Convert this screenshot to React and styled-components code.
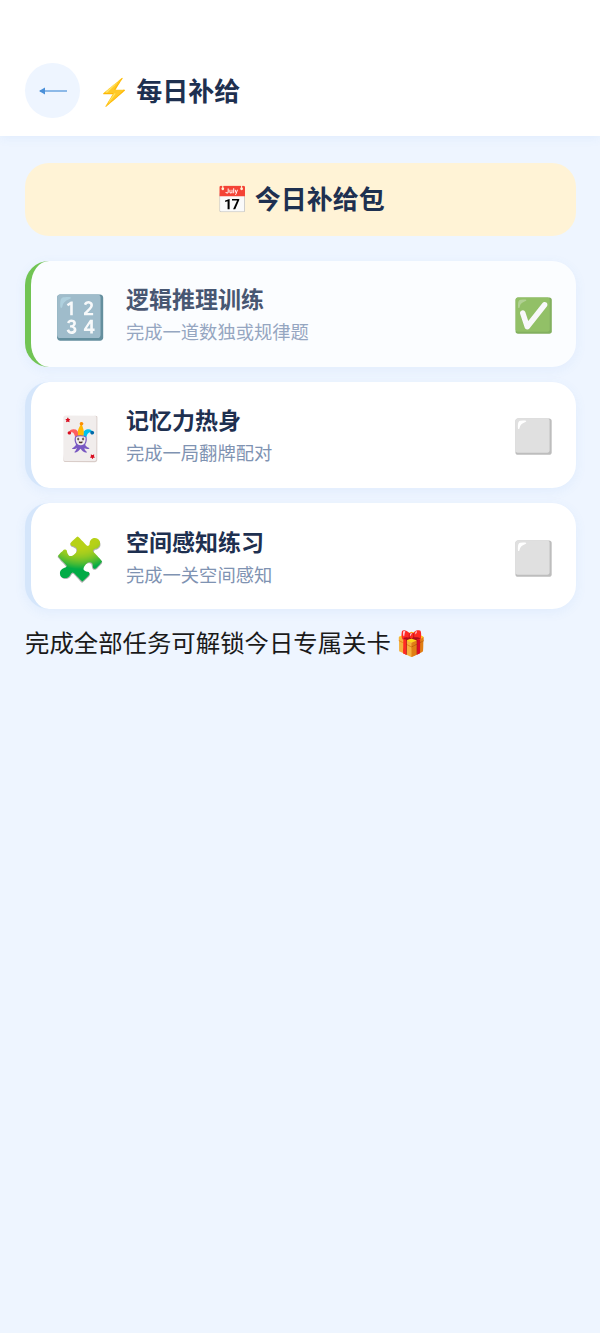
import React from 'react';
import styled, { createGlobalStyle } from 'styled-components';

const GlobalStyle = createGlobalStyle`
  html, body {
    margin: 0;
    padding: 0;
    background: #eef5ff;
  }
  body {
    font-family: "Noto Sans CJK SC", "Noto Sans", "Noto Color Emoji", sans-serif;
  }
`;

const Page = styled.div`
  min-height: 1333px;
  background: #eef5ff;
`;

const Header = styled.header`
  display: flex;
  align-items: center;
  gap: 18px;
  height: 136px;
  box-sizing: border-box;
  padding: 63px 25px 18px;
  background: #ffffff;
  box-shadow: 0 2px 10px rgba(74, 144, 226, 0.08);
`;

const BackButton = styled.button`
  display: flex;
  align-items: center;
  justify-content: center;
  width: 55px;
  height: 55px;
  padding: 0;
  border: none;
  border-radius: 50%;
  background: #eef5ff;
  color: #4a90d9;
`;

const Title = styled.h1`
  margin: 0;
  padding-bottom: 2px;
  font-size: 26px;
  line-height: 36px;
  font-weight: 700;
  color: #1e3050;
`;

const Content = styled.main`
  display: flex;
  flex-direction: column;
  padding: 27px 24px 0 25px;
`;

const Banner = styled.div`
  height: 73px;
  margin-bottom: 25px;
  border-radius: 24px;
  background: #fff3d6;
  font-size: 26px;
  font-weight: 700;
  line-height: 70px;
  text-align: center;
  color: #1e3050;
`;

const TaskList = styled.div`
  display: flex;
  flex-direction: column;
  gap: 15.6px;
`;

const TaskCard = styled.div`
  display: flex;
  align-items: center;
  height: 105.6px;
  box-sizing: border-box;
  padding: 0 22px 0 23px;
  border-radius: 24px;
  border-left: 6px solid ${props => (props.done ? '#52b82a' : '#d5e6fb')};
  background: #ffffff;
  box-shadow: 0 3px 12px rgba(74, 144, 226, 0.08);
  opacity: ${props => (props.done ? 0.8 : 1)};
`;

const TaskIcon = styled.div`
  flex: none;
  width: 50px;
  margin-right: 22px;
  font-size: 42px;
  line-height: 48px;
  text-align: center;
`;

const TaskBody = styled.div`
  flex: 1;
  min-width: 0;
`;

const TaskTitle = styled.div`
  font-size: 23px;
  line-height: 31px;
  font-weight: 700;
  color: #1e3050;
`;

const TaskDesc = styled.div`
  margin-top: 4px;
  font-size: 18.3px;
  line-height: 26px;
  color: #7f93b2;
`;

const TaskCheck = styled.div`
  flex: none;
  padding-bottom: 1px;
  font-size: 33px;
  line-height: 40px;
`;

const Footnote = styled.p`
  margin: 16px 0 0;
  font-size: 24.4px;
  line-height: 34px;
  color: #1a1a1a;
`;

const tasks = [
  { icon: '🔢', title: '逻辑推理训练', desc: '完成一道数独或规律题', done: true },
  { icon: '🃏', title: '记忆力热身', desc: '完成一局翻牌配对', done: false },
  { icon: '🧩', title: '空间感知练习', desc: '完成一关空间感知', done: false },
];

const App = () => (
  <Page>
    <GlobalStyle />
    <Header>
      <BackButton aria-label="返回">
        <svg width="30" height="12" viewBox="0 0 30 12" fill="none">
          <path d="M2 6H29" stroke="currentColor" strokeWidth="1.2" />
          <path d="M1 6L7 2.5V9.5Z" fill="currentColor" />
        </svg>
      </BackButton>
      <Title>⚡ 每日补给</Title>
    </Header>
    <Content>
      <Banner>📅 今日补给包</Banner>
      <TaskList>
        {tasks.map(task => (
          <TaskCard key={task.title} done={task.done}>
            <TaskIcon>{task.icon}</TaskIcon>
            <TaskBody>
              <TaskTitle>{task.title}</TaskTitle>
              <TaskDesc>{task.desc}</TaskDesc>
            </TaskBody>
            <TaskCheck>{task.done ? '✅' : '⬜'}</TaskCheck>
          </TaskCard>
        ))}
      </TaskList>
      <Footnote>完成全部任务可解锁今日专属关卡 🎁</Footnote>
    </Content>
  </Page>
);

export default App;
